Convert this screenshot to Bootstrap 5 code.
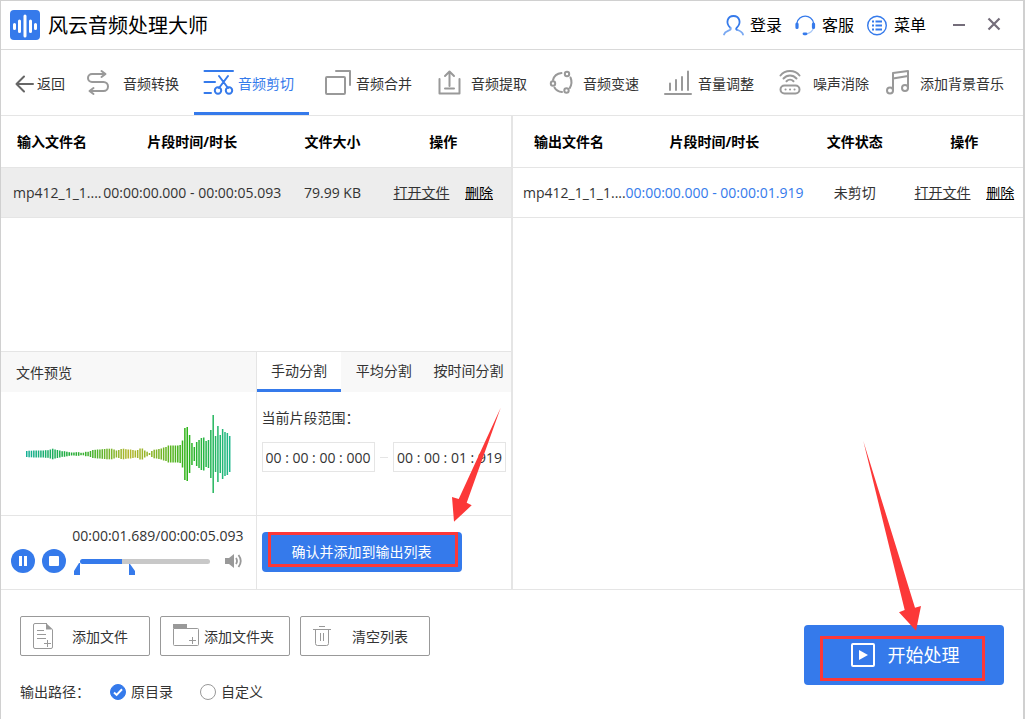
<!DOCTYPE html>
<html lang="zh-CN">
<head>
<meta charset="utf-8">
<meta name="viewport" content="width=device-width, initial-scale=1">
<title>风云音频处理大师</title>
<link href="https://cdn.jsdelivr.net/npm/bootstrap@5.3.0/dist/css/bootstrap.min.css" rel="stylesheet">
<style>
:root { --brand: #357aeb; --line: #e5e5e5; --ico: #999; --red: #fc3838; }
body { font: 14px/20px "Open Sans", "Noto Sans CJK SC", sans-serif; color: #333; background: #fff; }
svg { display: block; flex: none; overflow: visible; }
a { color: inherit; }
button { border: 0; background: none; padding: 0; color: inherit; }
.app { min-height: 100vh; border: 1px solid #d0d0d0; border-width: 1px 2px 0 1px; }
.titlebar { height: 49px; border-bottom: 1px solid #d9d9d9; padding: 0 17px 0 9px; color: #000; }
.titlebar h1 { font-size: 20px; line-height: 28px; font-weight: 400; padding-top: 2px; }
.top-link { font-size: 16px; line-height: 24px; gap: 6px; margin-right: 13px; text-decoration: none; }
.win-btn { width: 24px; height: 24px; }
.toolbar { height: 66px; border-bottom: 1px solid var(--line); }
.tool { width: 115px; gap: 2px; padding-left: 8px; border-bottom: 3px solid transparent; padding-top: 5px; text-decoration: none; white-space: nowrap; }
.tool.active { color: var(--brand); border-color: var(--brand); }
.tool.roomy { gap: 5px; }
.tool.wide { width: auto; padding-left: 0; }
.tool.back { width: 78px; padding-left: 14px; gap: 3px; }
.ln { fill: none; stroke: var(--ico); stroke-width: 2; stroke-linecap: round; stroke-linejoin: round; }
.panes { display: grid; grid-template-columns: minmax(0, 1fr) 2px minmax(0, 1fr); border-bottom: 1px solid var(--line); }
.split { background: var(--line); }
.files { table-layout: fixed; width: 100%; white-space: nowrap; text-align: center; }
.files th { height: 51px; color: #000; font-weight: 700; border-bottom: 1px solid var(--line); padding: 1px 0 0; text-align: center; }
.files td { height: 50px; border-bottom: 1px solid var(--line); padding: 2px 0 0; }
.files .ops { padding-right: 8px; }
.files.out .ops { padding-right: 0; }
.files tr.picked td { background: #ededed; }
.files .fname { text-align: left; padding-left: 12px; }
.files.out .fname { padding-left: 10px; }
.del { color: #000; margin-left: 12px; }
.lower { border-top: 1px solid var(--line); }
.preview { border-right: 1px solid var(--line); flex: 1 1 0; min-width: 0; }
.cutter { flex: 1 1 0; min-width: 0; }
.strip { height: 40px; background: #f8f8f8; }
.strip button { flex: 1 1 0; border-bottom: 3px solid transparent; white-space: nowrap; }
.strip button.active { background: #fff; border-color: var(--brand); }
.strip .caption { padding: 2px 15px 0; }
.stage { height: 124px; border-bottom: 1px solid var(--line); }
.inset { padding: 16px 5px 0; }
.player { height: 73px; padding: 10px 12px 0 10px; }
.controls { margin-top: 3px; }
.round { width: 24px; height: 24px; border-radius: 50%; background: var(--brand); }
.round + .round { margin-left: 7px; }
.seek { width: 130px; height: 24px; margin: 0 15px 0 14px; }
.seek input { appearance: none; width: 100%; height: 5px; border-radius: 3px; background: linear-gradient(to right, var(--brand) 32%, #c8c8c8 32%); display: block; }
.seek input::-webkit-slider-thumb { appearance: none; width: 1px; height: 5px; background: var(--brand); }
.marks { position: absolute; left: -6px; top: 13px; }
.range { gap: 5px; margin-top: 14px; }
.timebox { width: 113px; height: 30px; border: 1px solid var(--line); padding: 0 0 0 3px; color: #333; font: inherit; }
.dash { width: 10px; height: 1px; background: var(--line); }
.solid { background: var(--brand); color: #fff; border-radius: 4px; }
.confirm { width: 200px; height: 40px; }
.start { width: 200px; height: 60px; font-size: 18px; line-height: 26px; gap: 13px; padding-left: 15px; }
.frame { position: absolute; border: 3px solid var(--red); pointer-events: none; }
.confirm .frame { inset: 0 4px 5px 6px; }
.start .frame { inset: 11px 19px 4px 16px; }
.arrow { position: absolute; fill: var(--red); pointer-events: none; z-index: 2; }
.confirm .arrow { left: 190px; bottom: 50px; }
.start .arrow { left: 59px; bottom: 53px; }
.bottom { padding: 0 19px; }
.bottom .actions { padding: 26px 0 15px; }
.plain { width: 130px; height: 40px; border: 1px solid var(--ico); border-radius: 2px; }
.plain svg { margin-left: 11px; }
.plain span { padding: 2px 5px 0 0; }
.thin { fill: none; stroke: var(--ico); stroke-width: 1; }
.pick { appearance: none; width: 16px; height: 16px; margin: 0; border: 1px solid var(--ico); border-radius: 50%; background: #fff; }
.pick + label { padding-left: 5px; }
.pick:checked { border-color: var(--brand); background: var(--brand) url("data:image/svg+xml,%3Csvg xmlns='http://www.w3.org/2000/svg' viewBox='0 0 14 14'%3E%3Cpath d='M3 7.5l2.6 2.4L11 4.3' fill='none' stroke='%23fff' stroke-width='2'/%3E%3C/svg%3E"); }
</style>
</head>
<body>
<div class="app d-flex flex-column">
  <header class="titlebar d-flex align-items-center">
    <svg width="30" height="30"><rect width="30" height="30" rx="4" fill="#357aeb"/><g stroke="#fff" stroke-width="3" stroke-linecap="round"><path d="M4.500 14.500v4M9.500 11v10.500M15 6v20M20.500 11v10.500M25.500 14.500v4"/></g></svg>
    <h1 class="m-0 ms-2 me-auto">风云音频处理大师</h1>
    <a href="#" class="top-link d-flex align-items-center"><svg width="21" height="21" fill="none" stroke="#357aeb" stroke-width="1.800" stroke-linecap="round"><path d="M7.500 13C2 8 4.500 1 10.500 1S19 8 13.500 13c-.8 1-.2 1.600 1 2"/><path d="M7.500 13c1 1.600-.5 2-2.500 2.800-2 .8-3.500 1.800-4 3.700M14.500 15c3 1 5 2.200 5.500 4.500" stroke="#79a8f2"/></svg>登录</a>
    <a href="#" class="top-link d-flex align-items-center"><svg width="21" height="21" fill="none" stroke="#357aeb" stroke-width="1.300"><path d="M2 8a8.400 8.400 0 0 1 16.500 0"/><path d="M18.500 13c-1 3-3.500 5-6.500 5.800" stroke="#a9c8f7"/><path d="M2 9v3.500M18.500 9v3.500" stroke-width="3.200" stroke-linecap="round"/><path d="M9 18.800h2" stroke-width="2.800" stroke-linecap="round"/></svg>客服</a>
    <a href="#" class="top-link d-flex align-items-center me-0"><svg width="21" height="21" fill="none" stroke="#357aeb"><circle cx="10" cy="10.500" r="9.300" stroke-width="1.400"/><path d="M5 6.500h2M5 10.500h2M5 14.500h2M8.500 6.500H15M8.500 10.500H15M8.500 14.500H15" stroke-width="1.900"/></svg>菜单</a>
    <button class="win-btn ms-4" aria-label="最小化"><svg width="24" height="24"><path d="M3 12h12" stroke="#746d7a" stroke-width="2"/></svg></button>
    <button class="win-btn ms-2" aria-label="关闭"><svg width="24" height="24"><path d="M6.500 5.500l11 11M17.500 5.500l-11 11" stroke="#746d7a" stroke-width="2.200"/></svg></button>
  </header>

  <nav class="toolbar d-flex">
    <a href="#" class="tool back d-flex align-items-center"><svg width="19" height="20" class="ln"><path d="M18 10H1.500M9 2.500L1.500 10l7.500 7.500" style="stroke:#666"/></svg>返回</a>
    <a href="#" class="tool d-flex align-items-center"><svg width="34" height="30" class="ln"><path d="M18 5H5a3.800 3.800 0 0 0 0 8h11.500a4.500 4.500 0 0 1 0 9H4M14.500 2l4 3-4 3M6.500 19l-4 3 4 3"/></svg>音频转换</a>
    <a href="#" class="tool active d-flex align-items-center"><svg width="34" height="30" class="ln" style="stroke:#357aeb"><path d="M2.500 2H31M2.500 13H13M2.500 24H9M17 7l9 12M26 7l-9 12"/><circle cx="16" cy="21.500" r="3.200"/><circle cx="27" cy="21.500" r="3.200"/></svg>音频剪切</a>
    <a href="#" class="tool roomy d-flex align-items-center"><svg width="34" height="30" class="ln"><rect x="9" y="8" width="19" height="17" rx="1"/><path d="M19 2h14v14"/></svg>音频合并</a>
    <a href="#" class="tool roomy d-flex align-items-center"><svg width="34" height="30" class="ln"><path d="M7.500 10v14.500h20V10M17.500 17V3M13 7l4.500-4.500L22 7M13 19.500h9"/></svg>音频提取</a>
    <a href="#" class="tool d-flex align-items-center"><svg width="34" height="30" class="ln"><path d="M6 11c1-4 4-6.500 8.500-7M23.500 8.500c1.500 3.500 1.300 7-.7 10.500M15 23c-3.500-.2-6-1.800-7.500-4.500"/><circle cx="20" cy="5" r="2.200"/><circle cx="6" cy="14.500" r="2.200"/><circle cx="19.500" cy="21.500" r="2.200"/></svg>音频变速</a>
    <a href="#" class="tool d-flex align-items-center"><svg width="34" height="30" class="ln"><path d="M3 25h26M8 21v-6.500M14 21V11M20 21V8M26 21V2.500"/></svg>音量调整</a>
    <a href="#" class="tool d-flex align-items-center"><svg width="34" height="30" class="ln"><rect x="3.500" y="16.500" width="19" height="8" rx="4"/><path d="M3.500 6.500C8 .5 18 .5 22.500 6.500M6.500 9.500c3.500-4 9.500-4 13 0M9.500 12.300c2-2 5-2 7 0M8.500 20.500h.1M13 20.500h.1M17.500 20.500h.1"/></svg>噪声消除</a>
    <a href="#" class="tool wide d-flex align-items-center"><svg width="34" height="30" class="ln"><circle cx="6" cy="21.500" r="3"/><circle cx="21" cy="19" r="3"/><path d="M9 21.500V4l15-2v17M9 9.500l15-2.500"/></svg>添加背景音乐</a>
  </nav>

  <main class="panes flex-grow-1">
    <section class="d-flex flex-column">
      <div class="flex-grow-1">
        <table class="files">
          <colgroup><col style="width:20%"><col style="width:35%"><col style="width:20%"><col style="width:25%"></colgroup>
          <thead><tr><th>输入文件名</th><th>片段时间/时长</th><th>文件大小</th><th class="ops">操作</th></tr></thead>
          <tbody><tr class="picked"><td class="fname">mp412_1_1....</td><td>00:00:00.000 - 00:00:05.093</td><td>79.99 KB</td><td class="ops"><a href="#">打开文件</a> <a href="#" class="del">删除</a></td></tr></tbody>
        </table>
      </div>
      <div class="lower d-flex">
        <div class="preview">
          <div class="strip d-flex align-items-center"><span class="caption">文件预览</span></div>
          <div class="stage"><svg id="wave" width="100%" height="123">
            <defs><linearGradient id="hue" gradientUnits="userSpaceOnUse" x1="24" y1="0" x2="232" y2="0"><stop offset="0" stop-color="#16b09a"/><stop offset=".23" stop-color="#22ac32"/><stop offset=".35" stop-color="#52b42c"/><stop offset=".5" stop-color="#b4b62c"/><stop offset=".62" stop-color="#88b428"/><stop offset=".78" stop-color="#2cb418"/><stop offset="1" stop-color="#20b894"/></linearGradient></defs>
          </svg></div>
          <div class="player">
            <div class="text-end text-nowrap">00:00:01.689/00:00:05.093</div>
            <div class="controls d-flex align-items-center">
              <button class="round" aria-label="暂停"><svg width="24" height="24" fill="#fff"><path d="M8 7h3v10H8zM13 7h3v10h-3z"/></svg></button>
              <button class="round" aria-label="停止"><svg width="24" height="24"><rect x="7" y="7" width="10" height="10" rx="1" fill="#fff"/></svg></button>
              <div class="seek position-relative d-flex align-items-center"><input type="range" value="32" aria-label="播放进度"><svg class="marks" width="62" height="14" fill="#357aeb"><path d="M0 13V9l5-8h1v12zM55 2h1l5 7v4h-6z"/></svg></div>
              <button aria-label="音量"><svg width="18" height="18"><path d="M0 6h4l5-4v14l-5-4H0z" fill="#999"/><path d="M11 6q2 3 0 6M13.500 3q4.500 6 0 12" fill="none" stroke="#999" stroke-width="1.800"/></svg></button>
            </div>
          </div>
        </div>
        <div class="cutter">
          <div class="strip d-flex"><button class="active">手动分割</button><button>平均分割</button><button>按时间分割</button></div>
          <div class="stage inset">
            <label for="from" class="d-block">当前片段范围：</label>
            <div class="range d-flex align-items-center"><input id="from" class="timebox" value="00 : 00 : 00 : 000"><span class="dash"></span><input class="timebox" aria-label="结束时间" value="00 : 00 : 01 : 919"></div>
          </div>
          <div class="inset"><button class="solid confirm position-relative">确认并添加到输出列表<span class="frame"></span>
            <svg class="arrow" width="21" height="115" viewBox="0 0 21 115"><path d="M48.700 .7L6.700 92 0 90l2 24.700L19.700 98.300l-5-2.600z"/></svg></button></div>
        </div>
      </div>
    </section>
    <div class="split"></div>
    <section>
      <table class="files out">
        <colgroup><col style="width:22%"><col style="width:35%"><col style="width:20%"><col style="width:23%"></colgroup>
        <thead><tr><th>输出文件名</th><th>片段时间/时长</th><th>文件状态</th><th class="ops">操作</th></tr></thead>
        <tbody><tr><td class="fname">mp412_1_1_1....</td><td style="color:var(--brand)">00:00:00.000 - 00:00:01.919</td><td>未剪切</td><td class="ops"><a href="#">打开文件</a> <a href="#" class="del">删除</a></td></tr></tbody>
      </table>
    </section>
  </main>

  <footer class="bottom d-flex align-items-center justify-content-between">
    <div class="actions">
      <div class="d-flex" style="gap:10px">
        <button class="plain d-flex align-items-center"><svg width="24" height="26" class="thin"><path d="M15 .5H3A1.500 1.500 0 0 0 1.500 2v22A1.500 1.500 0 0 0 3 25.500h16a1.500 1.500 0 0 0 1.500-1.500V6.500M5 7.500h7M5 11.500h9M5 15.500h9M12 20.500h7M15.500 17v7"/><path d="M14 0v6.500h7z" fill="#999" stroke="none"/></svg><span class="flex-fill text-center">添加文件</span></button>
        <button class="plain d-flex align-items-center"><svg width="28" height="24" class="thin"><path d="M1.500 4.500h24a1 1 0 0 1 1 1v15a1 1 0 0 1-1 1H2.500a1 1 0 0 1-1-1zM17 16.500h7M20.500 13v7"/><path d="M1 0h14v4H1z" fill="#999" stroke="none"/></svg><span class="ps-1">添加文件夹</span></button>
        <button class="plain d-flex align-items-center"><svg width="24" height="22" class="thin"><path d="M1 4.500h18M7 1.500h6M3.500 4.500v14a2 2 0 0 0 2 2h9a2 2 0 0 0 2-2v-14M8.500 8v8M11.500 8v8"/></svg><span class="flex-fill text-center">清空列表</span></button>
      </div>
      <div class="d-flex align-items-center mt-4" style="height:24px">
        <span style="width:90px">输出路径：</span>
        <input class="pick" type="radio" name="dir" id="d1" checked><label for="d1" style="width:74px">原目录</label>
        <input class="pick" type="radio" name="dir" id="d2"><label for="d2">自定义</label>
      </div>
    </div>
    <button class="solid start position-relative d-flex align-items-center justify-content-center"><svg width="24" height="24"><rect x="1" y="1" width="22" height="22" rx="1" fill="none" stroke="#fff" stroke-width="2"/><path d="M8 7l9 5-9 5z" fill="#fff"/></svg>开始处理<span class="frame"></span>
      <svg class="arrow" width="59" height="192" viewBox="0 0 59 192"><path d="M.3 1l41.400 169-5.700 2.300 17 18.400L58 166l-6 1.700z"/></svg></button>
  </footer>
</div>
<script src="https://cdn.jsdelivr.net/npm/bootstrap@5.3.0/dist/js/bootstrap.bundle.min.js"></script>
<script>
// Half-heights of the waveform bars, left to right
const levels = [3,3.3,3.3,3.5,3.5,3.5,3.5,3.5,3.8,3.8,4.5,5.3,4.5,4,3.5,2.8,2.8,2.3,1.8,1.5,1.5,1.8,1.8,1.2,1.3,2.2,2.2,3,4,4.2,4.5,4.5,4.8,5,5.3,5.3,5.3,4.5,3.5,4,5,5.3,4.8,4.5,4.5,4,3.5,4,5.5,5.5,3.5,2.3,1,3,4.3,4.5,5,5.5,6.5,7,8.5,8.5,8.5,8.5,8.5,9,13.5,26,27,19,11,7,12,14,16,16.5,13,14,24,39,18,28,19,25,22,21,18];
const wave = document.getElementById('wave');
levels.forEach((h, i) => {
  const r = document.createElementNS('http://www.w3.org/2000/svg', 'rect');
  r.setAttribute('x', 25 + i * 2.36);
  r.setAttribute('y', 62 - h);
  r.setAttribute('width', 1.5);
  r.setAttribute('height', h * 2);
  r.setAttribute('fill', 'url(#hue)');
  wave.appendChild(r);
});
</script>
</body>
</html>
